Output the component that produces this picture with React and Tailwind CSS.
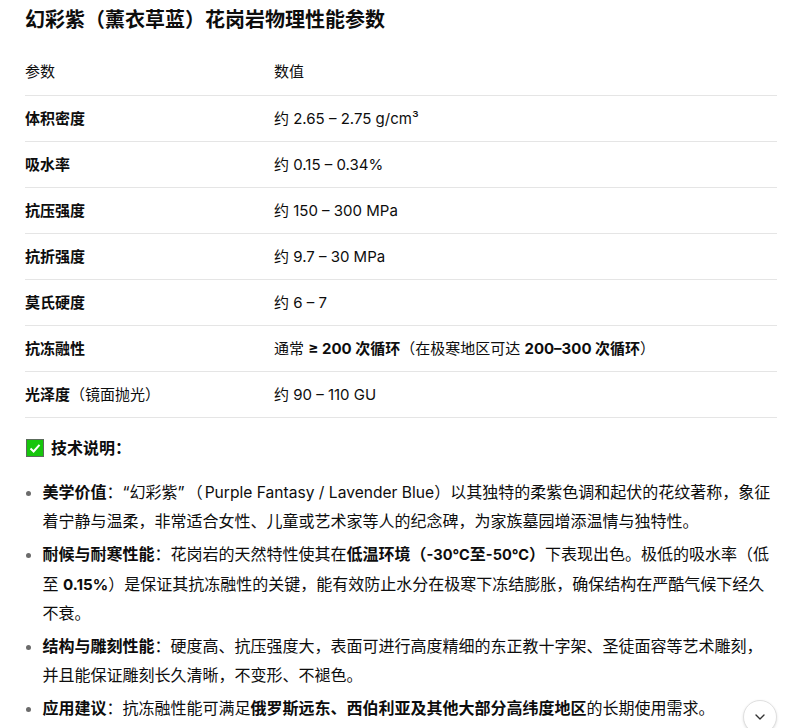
import { ChevronDown } from "lucide-react";

const rows = [
  [<strong>体积密度</strong>, <>约 2.65 – 2.75 g/cm³</>],
  [<strong>吸水率</strong>, <>约 0.15 – 0.34%</>],
  [<strong>抗压强度</strong>, <>约 150 – 300 MPa</>],
  [<strong>抗折强度</strong>, <>约 9.7 – 30 MPa</>],
  [<strong>莫氏硬度</strong>, <>约 6 – 7</>],
  [<strong>抗冻融性</strong>, <>通常 <strong>≥ 200 次循环</strong>（在极寒地区可达 <strong>200–300 次循环</strong>）</>],
  [<><strong>光泽度</strong>（镜面抛光）</>, <>约 90 – 110 GU</>],
];

function CheckBox() {
  return (
    <svg width="18" height="18" viewBox="0 0 18 18" className="shrink-0">
      <rect x="0.5" y="0.5" width="17" height="17" fill="#16c60c" stroke="#5c6b5c" />
      <path d="M4.5 9.5 L7.6 12.5 L13.5 5.8" fill="none" stroke="#fff" strokeWidth="2" />
    </svg>
  );
}

export default function App() {
  return (
    <div className="relative h-[728px] w-[788px] overflow-hidden bg-white text-[#0d0d0d] font-['Inter','Noto_Sans_CJK_SC',sans-serif] [text-spacing-trim:space-all]">
      <div className="pl-[25px] pr-[11px] pt-[8px]">
        <h3 className="text-[20px] leading-[24px] font-semibold">幻彩紫（薰衣草蓝）花岗岩物理性能参数</h3>

        <table className="mt-[16px] w-full border-collapse text-[15px] leading-[22px]">
          <thead>
            <tr className="border-b border-[#e5e5e5] h-[47px]">
              <th className="w-[249px] p-0 pt-[2px] text-left font-normal">参数</th>
              <th className="p-0 pt-[2px] text-left font-normal">数值</th>
            </tr>
          </thead>
          <tbody>
            {rows.map((r, i) => (
              <tr key={i} className="border-b border-[#e5e5e5] h-[46px]">
                <td className="p-0 pt-[2px]">{r[0]}</td>
                <td className="p-0 pt-[2px]">{r[1]}</td>
              </tr>
            ))}
          </tbody>
        </table>

        <div className="mt-[18px] flex items-center gap-[7px] pl-[1px] text-[16px] leading-[24px] font-semibold">
          <CheckBox />
          <span>技术说明：</span>
        </div>

        <ul className="mt-[18px] list-disc pl-[17.5px] text-[16px] leading-[29px] marker:text-[#6b6b6b]">
          <li className="mb-[4px]"><strong>美学价值</strong>：“幻彩紫”<span className="ml-[2px]">（</span><span className="ml-[2px] text-[15.6px]">Purple Fantasy / Lavender Blue</span>）以其独特的柔紫色调和起伏的花纹著称，象征着宁静与温柔，非常适合女性、儿童或艺术家等人的纪念碑，为家族墓园增添温情与独特性。</li>
          <li className="mb-[4px]"><strong>耐候与耐寒性能</strong>：花岗岩的天然特性使其在<strong>低温环境（<span className="text-[14.6px]">-30℃</span>至<span className="text-[14.6px]">-50℃</span>）</strong>下表现出色。极低的吸水率（低至 <strong className="text-[15.2px]">0.15%</strong>）是保证其抗冻融性的关键，能有效防止水分在极寒下冻结膨胀，确保结构在严酷气候下经久不衰。</li>
          <li className="mb-[4px]"><strong>结构与雕刻性能</strong>：硬度高、抗压强度大，表面可进行高度精细的东正教十字架、圣徒面容等艺术雕刻，并且能保证雕刻长久清晰，不变形、不褪色。</li>
          <li><strong>应用建议</strong>：抗冻融性能可满足<strong>俄罗斯远东、西伯利亚及其他大部分高纬度地区</strong>的长期使用需求。</li>
        </ul>
      </div>

      <button className="absolute left-[743px] top-[700px] flex h-[34px] w-[34px] items-center justify-center rounded-full border border-[#e0e0e0] bg-white shadow-sm">
        <ChevronDown size={16} strokeWidth={2} color="#333" />
      </button>
    </div>
  );
}
